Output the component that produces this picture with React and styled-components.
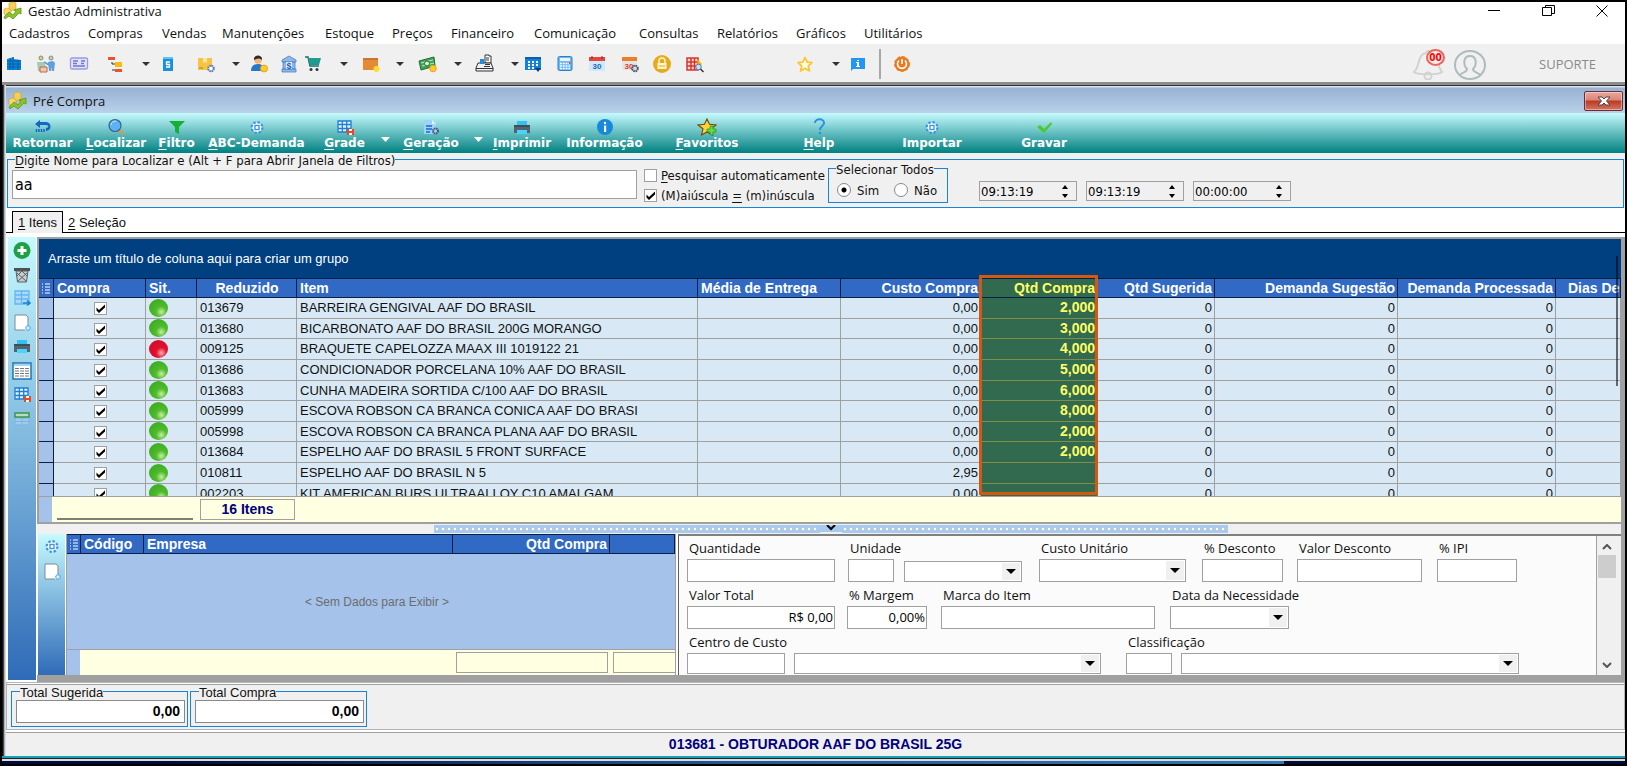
import { useId } from "react";
import styled, { createGlobalStyle, css } from "styled-components";

const UI = `"Open Sans", "Noto Sans", sans-serif`;
const TAHOMA = `"DejaVu Sans Condensed", "DejaVu Sans", sans-serif`;
const VERDANA = `"DejaVu Sans", sans-serif`;
const GRID = `"Liberation Sans", sans-serif`;

/* ---------- data ---------- */

const menus = [
  ["Cadastros", 79],
  ["Compras", 74],
  ["Vendas", 60],
  ["Manutenções", 103],
  ["Estoque", 67],
  ["Preços", 59],
  ["Financeiro", 83],
  ["Comunicação", 105],
  ["Consultas", 78],
  ["Relatórios", 79],
  ["Gráficos", 68],
  ["Utilitários", 78],
];

// [icon, space before it, label]
const shortcuts = [
  ["building", 2, "Empresas"],
  ["people", 12, "Clientes"],
  ["card", 13, "Cartões"],
  ["tree", 16, "Plano de contas"],
  ["arrow", 16, "Mais planos"],
  ["notebook", 7, "Caderno"],
  ["boxGear", 18, "Produtos"],
  ["arrow", 15, "Mais produtos"],
  ["person", 8, "Vendedores"],
  ["bank", 10, "Bancos"],
  ["cart", 4, "Compras"],
  ["arrow", 16, "Mais compras"],
  ["box", 12, "Estoque"],
  ["arrow", 14, "Mais estoque"],
  ["cash", 13, "Financeiro"],
  ["arrow", 15, "Mais financeiro"],
  ["register", 12, "Caixa"],
  ["arrow", 15, "Mais caixa"],
  ["calendar", 3, "Agenda"],
  ["calculator", 12, "Calculadora"],
  ["cal30", 12, "Calendário"],
  ["cal30Gear", 13, "Configurar calendário"],
  ["lock", 12, "Bloquear"],
  ["gridSearch", 13, "Consultar"],
  ["star", 90, "Favoritos"],
  ["arrow", 16, "Mais favoritos"],
  ["infoBox", 7, "Informações"],
];

const actions = [
  ["Retornar", "back", 73],
  ["&Localizar", "search", 74],
  ["&Filtro", "funnel", 47],
  ["&ABC-Demanda", "gear", 113],
  ["&Grade", "gridSave", 63],
  [null, "whiteArrow", 18],
  ["&Geração", "docGear", 74],
  [null, "whiteArrow", 19],
  ["&Imprimir", "printer", 70],
  ["Informação", "info", 95],
  ["&Favoritos", "starPlus", 110],
  ["&Help", "help", 114],
  ["Importar", "gear", 112],
  ["Gravar", "check", 112],
];

const sideTools = [
  ["add", "Adicionar"],
  ["trash", "Excluir"],
  ["sheetArrow", "Mover"],
  ["page", "Novo"],
  ["printer", "Imprimir"],
  ["listView", "Lista"],
  ["gridSave", "Salvar grade"],
  ["sheetGreen", "Planilha"],
];

const columns = [
  { title: "Compra", width: 92 },
  { title: "Sit.", width: 51 },
  { title: "Reduzido", width: 100, align: "center" },
  { title: "Item" },
  { title: "Média de Entrega", width: 143 },
  { title: "Custo Compra", width: 140, align: "right" },
  { title: "Qtd Compra", width: 117, align: "right", marked: true },
  { title: "Qtd Sugerida", width: 117, align: "right" },
  { title: "Demanda Sugestão", width: 183, align: "right" },
  { title: "Demanda Processada", width: 158, align: "right" },
  { title: "Dias De", width: 65, last: true },
];

const items = [
  ["013679", "BARREIRA GENGIVAL AAF DO BRASIL", "0,00", "2,000"],
  ["013680", "BICARBONATO AAF DO BRASIL 200G MORANGO", "0,00", "3,000"],
  ["009125", "BRAQUETE CAPELOZZA MAAX III 1019122 21", "0,00", "4,000", "red"],
  ["013686", "CONDICIONADOR PORCELANA 10% AAF DO BRASIL", "0,00", "5,000"],
  ["013683", "CUNHA MADEIRA SORTIDA C/100 AAF DO BRASIL", "0,00", "6,000"],
  ["005999", "ESCOVA ROBSON CA BRANCA CONICA AAF DO BRASI", "0,00", "8,000"],
  ["005998", "ESCOVA ROBSON CA BRANCA PLANA AAF DO BRASIL", "0,00", "2,000"],
  ["013684", "ESPELHO AAF DO BRASIL 5 FRONT SURFACE", "0,00", "2,000"],
  ["010811", "ESPELHO AAF DO BRASIL N 5", "2,95", ""],
  ["002203", "KIT AMERICAN BURS ULTRAALLOY C10 AMALGAM", "0,00", ""],
];

/* ---------- icons ---------- */

const glyphs = {
  logo: (
    <>
      <path d="M7 2l4-1 3 1v6l-4 2-3-2z" fill="#f5cf52" stroke="#c9a02c" strokeWidth=".6" />
      <path d="M2 8l4-1 3 2v4l-4 2-3-2z" fill="#f8d768" stroke="#c9a02c" strokeWidth=".6" />
      <path d="M2 16l5-5 4 3 3-4-2-1 7-2v6l-2-1-6 6-4-3-4 3z" fill="#8cc427" stroke="#5f951a" strokeWidth=".8" />
    </>
  ),
  arrow: <path d="M1 8h8L5 12z" fill="#333" />,
  whiteArrow: <path d="M6 0h9l-4.500 5z" fill="#fff" />,
  building: (
    <>
      <path d="M3 5l7-2v13H3zM10 5l7 1v10h-7z" fill="#0b86dc" />
      <path d="M3 7h14M3 10h14M3 13h14M6 4v12M9 3v13M14 6v10" stroke="#0a559f" strokeWidth=".8" />
    </>
  ),
  people: (
    <>
      <circle cx="5" cy="4" r="2" fill="#f2c48a" stroke="#6f9a74" />
      <circle cx="15" cy="4" r="2" fill="#f2c48a" stroke="#6f8ea8" />
      <path d="M1 8h7l2 5v4H2z" fill="#a9c9b2" />
      <path d="M12 8l5-1 2 2-1 8h-2v-4l-1 4h-2z" fill="#5f9fdc" />
      <path d="M8 8l5 3" stroke="#5f9fdc" strokeWidth="2" />
      <path d="M4 13h7v5H4z" fill="#f3c6ad" stroke="#b56b49" />
    </>
  ),
  card: (
    <>
      <rect x="1.500" y="4" width="17" height="11" rx="1.500" fill="#e2e2fb" stroke="#9a9ae0" strokeWidth="1.300" />
      <path d="M4 7h5M4 9.500h4M4 12h12M12 7h4M12 9.500h3" stroke="#7474d0" strokeWidth="1.300" />
    </>
  ),
  tree: (
    <>
      <path d="M3 3h7v3H3z" fill="#e9542c" />
      <path d="M10 8h7v5h-7z" fill="#f3bd0f" />
      <path d="M10 15h7v3h-7z" fill="#e9542c" />
      <path d="M7 16h3M7 8v2h3" stroke="#333" fill="none" />
    </>
  ),
  notebook: (
    <>
      <path d="M5 3h10v14H5z" fill="#1a8fe0" />
      <path d="M5 3h10v2H5z" fill="#53c7f7" />
      <path d="M12 8H8.500v2.500h3V13H8" stroke="#fff" strokeWidth="1.300" fill="none" />
    </>
  ),
  boxGear: (
    <>
      <path d="M2 4h14v12H2z" fill="#f5c445" />
      <path d="M7 4h4v5l-2-1-2 1z" fill="#fbe6a1" />
      <path d="M3 14h4" stroke="#a5802a" />
      <circle cx="15" cy="14.500" r="2.800" fill="#fff" stroke="#5a78b5" strokeWidth="2" strokeDasharray="1.600 .600" />
    </>
  ),
  person: (
    <>
      <circle cx="9" cy="6" r="3.800" fill="#f4b573" />
      <path d="M5 6c-1-6 9-6 8 0-2-2-5-2-8 0z" fill="#2b2b33" />
      <path d="M2 17c0-6 4-7 7-7s6 1 6 7z" fill="#2a77c9" />
      <circle cx="15" cy="14.500" r="3.500" fill="#ffc931" stroke="#e9a512" />
    </>
  ),
  bank: (
    <>
      <path d="M3 6l7-4 7 4v2H3zM3 15h14v3H3zM4 8h12v7H4z" fill="#8fb8e8" stroke="#4a80c8" strokeWidth=".8" />
      <path d="M7 8h6v7H7z" fill="#e4f0fc" />
      <text x="10" y="15" fontSize="9" fontWeight="700" textAnchor="middle" fill="#2560ad" fontFamily="Liberation Sans">$</text>
    </>
  ),
  cart: (
    <>
      <path d="M2 3h3l2 9h9" fill="none" stroke="#1f6d68" strokeWidth="1.500" />
      <path d="M5 4h13l-2 7H7z" fill="#1f9c90" />
      <circle cx="8" cy="15.500" r="1.500" fill="#1d3e55" />
      <circle cx="14" cy="15.500" r="1.500" fill="#1d3e55" />
    </>
  ),
  box: (
    <>
      <path d="M2 4h15v12H2z" fill="#e28a35" />
      <path d="M2 4h15v2H2z" fill="#cc7526" />
      <circle cx="15.500" cy="15" r="3" fill="#ffdc2e" />
    </>
  ),
  cash: (
    <>
      <path d="M1 7l15-4 1 9-14 4z" fill="#3fa455" stroke="#246b37" />
      <path d="M3 9l12-3M4 12l12-3" stroke="#bfe8c4" />
      <circle cx="9" cy="9.500" r="2.500" fill="#d4f0d6" stroke="#246b37" />
      <circle cx="15" cy="14.500" r="3.300" fill="#ffc931" stroke="#e9a512" />
    </>
  ),
  register: (
    <>
      <path d="M10 1h4v1h2v7h-6z" fill="#fff" stroke="#333" />
      <path d="M3 9h13l2 5v3H1v-3z" fill="#eef2f6" stroke="#333" />
      <path d="M5 5h4v5H5z" fill="#1f8ce0" />
      <path d="M11 4h3M11 6h3M10 10.500h5M9 12.500h6M1 14.500h17" stroke="#333" />
    </>
  ),
  calendar: (
    <>
      <path d="M2 3h16v13H2z" fill="#1481d8" />
      <path d="M2 3h16v2H2z" fill="#0c5ea8" />
      <path d="M5 8h2M9 8h2M13 8h2M5 11h2M9 11h2M13 11h2M5 14h2M9 14h2" stroke="#fff" strokeWidth="2" />
      <path d="M12 14h6l-3 4z" fill="#123e73" />
    </>
  ),
  calculator: (
    <>
      <rect x="3" y="2.500" width="14" height="14" rx="1.500" fill="#6db8f2" stroke="#2a7fca" />
      <path d="M5 4h10v3H5z" fill="#e8f5ff" />
      <path d="M5 9.500h10M5 12h10M5 14.500h10" stroke="#fff" strokeWidth="1.600" strokeDasharray="1.800 1" />
      <path d="M14 8h1.500v2H14z" fill="#e34b3c" />
    </>
  ),
  cal30: (
    <>
      <path d="M2 3h16v14H2z" fill="#cfe9fb" />
      <path d="M2 3h16v4H2z" fill="#e5453a" />
      <path d="M5 2v3M15 2v3" stroke="#8f2a22" />
      <text x="10" y="15" fontSize="8" fontWeight="700" textAnchor="middle" fill="#1769b8" fontFamily="Liberation Sans">30</text>
    </>
  ),
  cal30Gear: (
    <>
      <path d="M2 3h15v13H2z" fill="#e5e5e5" />
      <path d="M2 3h15v4H2z" fill="#ee7d28" />
      <text x="9" y="15" fontSize="8" fontWeight="700" textAnchor="middle" fill="#d8402f" fontFamily="Liberation Sans">30</text>
      <circle cx="15" cy="14.500" r="2.800" fill="#d9dde0" stroke="#47586a" strokeWidth="2" strokeDasharray="1.600 .600" />
    </>
  ),
  lock: (
    <>
      <circle cx="10" cy="10" r="9" fill="#e6ab1d" />
      <path d="M5.500 9h9v6h-9z" fill="#fff3cf" />
      <path d="M7 9V7c0-4 6-4 6 0v2" fill="none" stroke="#fff3cf" strokeWidth="1.500" />
      <path d="M7 12h6" stroke="#e6ab1d" />
    </>
  ),
  gridSearch: (
    <>
      <path d="M2 4h11v12H2z" fill="#fbd8d4" stroke="#d9332b" strokeWidth="1.500" />
      <path d="M2 8h11M2 12h11M6 4v12M9.500 4v12" stroke="#d9332b" strokeWidth="1.500" />
      <path d="M12 5l5 5-4 4z" fill="#f4b400" />
      <circle cx="13.500" cy="13" r="2.800" fill="#c4e4fa" stroke="#4f7fae" />
      <path d="M15.500 15l3 3" stroke="#333" strokeWidth="1.500" />
    </>
  ),
  star: (
    <path d="M10 3.500l2.200 4.600 4.800.5-3.700 3.400 1.200 5-4.500-2.700L5.500 17l1.200-5L3 8.600l4.800-.5z" fill="#fffbe8" stroke="#fdc52e" strokeWidth="1.700" strokeLinejoin="round" />
  ),
  infoBox: (
    <>
      <path d="M3 4h14v11H5l-2 2z" fill="#2196f3" />
      <path d="M9 6h2v1H9zM8 8h3v4h1v1H8v-1h1V9H8z" fill="#fff" />
    </>
  ),
  power: (
    <>
      <circle cx="10" cy="10" r="7.500" fill="#ea7a1e" stroke="#ea7a1e" strokeDasharray="3 2" />
      <path d="M7 6.500a4.500 4.500 0 1 0 6 0" fill="none" stroke="#fff" strokeWidth="1.600" />
      <path d="M10 5v5" stroke="#fff" strokeWidth="1.600" />
    </>
  ),
  back: (
    <>
      <path d="M2 6l5-4v2h6c6 0 6 9 0 9v-3c3 0 3-3 0-3H7v3z" fill="#1664c4" />
      <path d="M3.500 11v3M6 11v3M8.500 11v3M11 11v3" stroke="#1664c4" strokeWidth="1.500" />
    </>
  ),
  search: (
    <>
      <path d="M13 12l4 4" stroke="#d79a4c" strokeWidth="2.500" />
      <circle cx="9" cy="7.500" r="6" fill="#5cb2f5" stroke="#3a648c" strokeWidth="1.200" />
      <path d="M5 7c0-3 3-4 5-3.500" stroke="#c9e8ff" fill="none" />
    </>
  ),
  funnel: <path d="M2 3h16l-6 6v7l-4-2V9z" fill="#14b032" />,
  gear: (
    <>
      <circle cx="10" cy="9.500" r="5" fill="#eef8ff" stroke="#3f92dc" strokeWidth="3" strokeDasharray="2.200 1.700" />
      <circle cx="10" cy="9.500" r="4.300" fill="#eef8ff" />
      <rect x="8" y="7.500" width="4" height="4" fill="#fff" stroke="#3f92dc" strokeWidth="1.300" />
    </>
  ),
  gridSave: (
    <>
      <path d="M3 3h13v11H3z" fill="#e4f2fc" stroke="#1d7fd6" strokeWidth="1.300" />
      <path d="M3 6.500h13M3 10.500h13M7.300 3v11M11.700 3v11" stroke="#1d7fd6" strokeWidth="1.300" />
      <path d="M12 11h7v6h-7z" fill="#f0471f" />
      <path d="M14 11h3v2h-3zM14 15h3v2h-3z" fill="#fff" />
    </>
  ),
  docGear: (
    <>
      <path d="M3 2h8l4 4v10H3z" fill="#9ed3fb" />
      <path d="M11 2l4 4h-4z" fill="#e1f3ff" />
      <path d="M5 8h6M5 11h6M5 14h4" stroke="#1769c8" strokeWidth="1.500" />
      <circle cx="14.500" cy="13" r="2.500" fill="#9ed3fb" stroke="#435a70" strokeWidth="2" strokeDasharray="1.500 .5" />
    </>
  ),
  printer: (
    <>
      <path d="M5 3h10v5H5z" fill="#2fc3f2" />
      <path d="M2 7h16v8H2z" fill="#56636f" />
      <path d="M2 7h16v2H2z" fill="#424d58" />
      <path d="M5 12h10v4H5z" fill="#48d4fb" />
    </>
  ),
  info: (
    <>
      <circle cx="10" cy="9" r="8" fill="#1688dd" />
      <circle cx="10" cy="5" r="1.200" fill="#fff" />
      <path d="M9 7.500h2.200V14H9z" fill="#fff" />
    </>
  ),
  starPlus: (
    <>
      <path d="M10 1l2.500 5.300 6.500.7-5 3.800 1.500 6.200-5.500-3-5.500 3L6 10.800 1 7l6.500-.7z" fill="#fcd23a" stroke="#6b4a12" strokeWidth="1.100" />
      <path d="M13 8h3v3h3v3h-3v3h-3v-3h-3v-3h3z" fill="#5fdc45" stroke="#1e7d18" strokeWidth=".6" />
    </>
  ),
  help: (
    <>
      <path d="M6 5c0-5 9-5 9 0 0 3-4 3-4 7" fill="none" stroke="#2b91e0" strokeWidth="2" />
      <circle cx="11" cy="15" r="1.300" fill="#2b91e0" />
    </>
  ),
  check: <path d="M3 9l3-2 4 4 7-7 1 2-8 9z" fill="#4dc92c" />,
  add: (
    <>
      <circle cx="10" cy="9.500" r="8.500" fill="#1ea044" />
      <path d="M8.500 5h3v3h3v3h-3v3h-3v-3h-3V8h3z" fill="#fff" />
    </>
  ),
  trash: (
    <>
      <path d="M2 3h16v3H2z" fill="#4e5153" />
      <path d="M4 6h12l-1.500 11h-9z" fill="#c2cbd0" stroke="#5b6063" />
      <path d="M5 8l9 8M15 8l-9 8M10 6l5 5M10 6l-5 5" stroke="#5b6063" />
    </>
  ),
  sheetArrow: (
    <>
      <path d="M3 2h14v13H3zM3 6h14M3 10h14M9.500 2v13" fill="#a9dafa" stroke="#66b5ee" strokeWidth="1.300" />
      <path d="M11 14h6M15 11.500l3 2.500-3 2.500" stroke="#187fd8" fill="none" strokeWidth="1.500" />
    </>
  ),
  page: (
    <>
      <path d="M3 2h11l2 2v13H3z" fill="#fff" />
      <path d="M16 4v9M13 17H3V2h11l2 2" fill="none" stroke="#7d8b92" />
      <circle cx="16" cy="15" r="2.300" fill="#d3edfd" stroke="#4ba6e8" />
    </>
  ),
  listView: (
    <>
      <path d="M1 2h18v16H1z" fill="#fff" stroke="#1d77b8" strokeWidth="1.500" />
      <path d="M2 3h16v2H2z" fill="#a8d1ec" />
      <path d="M3 7.500h4M8 7.500h4M13 7.500h4M3 10h4M8 10h4M13 10h4M3 12.500h4M8 12.500h4M13 12.500h4M3 15h4M8 15h4M13 15h4" stroke="#777" />
    </>
  ),
  sheetGreen: (
    <>
      <path d="M3 9h14v7H3zM10 9v7M3 12.500h14" fill="#9ecbec" stroke="#7db5e2" />
      <path d="M3 4h14v4H3z" fill="#b8dcc0" stroke="#3c9450" strokeWidth="1.500" />
    </>
  ),
  list: <path d="M1 2h1M4 2h5M1 5h1M4 5h5M1 8h1M4 8h5M1 11h1M4 11h5" stroke="#fff" />,
};

const Icon = ({ name, w = 20, h = 20 }) => (
  <svg width={w} height={h} viewBox={`0 0 ${w} ${h}`} aria-hidden="true">
    {glyphs[name]}
  </svg>
);

// "&" marks the accelerator letter
const Accel = ({ text }) => {
  const at = text.indexOf("&");
  if (at < 0) return text;
  return (
    <span>
      {text.slice(0, at)}
      <u>{text[at + 1]}</u>
      {text.slice(at + 2)}
    </span>
  );
};

const CheckBox = (props) => (
  <CheckWrap>
    <CheckInput type="checkbox" {...props} />
    <svg width="13" height="13" viewBox="0 0 13 13" aria-hidden="true">
      <path d="M2.500 5.500v3L5 11l6-5.500v-3L5 8z" fill="#000" />
    </svg>
  </CheckWrap>
);

const Combo = ({ width, height, ...rest }) => (
  <ComboWrap $w={width} $h={height}>
    <ComboSelect {...rest} />
    <ComboArrow>
      <svg width="10" height="6" viewBox="0 0 10 6" aria-hidden="true">
        <path d="M0 0h10L5 5z" fill="#000" />
      </svg>
    </ComboArrow>
  </ComboWrap>
);

const Field = ({ label, width, gap, combo, height, ...rest }) => {
  const id = useId();
  return (
    <FieldBox $gap={gap}>
      {label && <FieldLabel htmlFor={id}>{label}</FieldLabel>}
      {combo ? (
        <Combo id={id} width={width} height={height} {...rest} />
      ) : (
        <TextInput id={id} $w={width} $h={height} {...rest} />
      )}
    </FieldBox>
  );
};

const TimeField = ({ value, label }) => (
  <TimeBox>
    <TimeInput defaultValue={value} aria-label={label} />
    <Spinner>
      <button aria-label="Aumentar">
        <svg width="6" height="4" viewBox="0 0 6 4"><path d="M0 4l3-4 3 4z" /></svg>
      </button>
      <button aria-label="Diminuir">
        <svg width="6" height="4" viewBox="0 0 6 4"><path d="M0 0l3 4 3-4z" /></svg>
      </button>
    </Spinner>
  </TimeBox>
);

const ItemsTable = () => (
  <DataTable>
    <colgroup>
      <col width="15" />
      {columns.map((c) => (
        <col key={c.title} width={c.width} />
      ))}
    </colgroup>
    <thead>
      <tr>
        <HeadCell $align="center"><Icon name="list" w={10} h={13} /></HeadCell>
        {columns.map((c) => (
          <HeadCell key={c.title} scope="col" $align={c.align} $marked={c.marked} $last={c.last}>
            {c.title}
          </HeadCell>
        ))}
      </tr>
    </thead>
    <tbody>
      {items.map(([code, name, cost, qty, status]) => (
        <ItemRow key={code}>
          <Indicator />
          <Cell $align="center">
            <CheckBox defaultChecked aria-label={`Comprar ${name}`} />
          </Cell>
          <Cell><Ball $red={status === "red"} /></Cell>
          <Cell>{code}</Cell>
          <Cell>{name}</Cell>
          <Cell />
          <Cell $align="right">{cost}</Cell>
          <Cell $align="right" $marked>{qty}</Cell>
          <Cell $align="right">0</Cell>
          <Cell $align="right">0</Cell>
          <Cell $align="right">0</Cell>
          <Cell />
        </ItemRow>
      ))}
    </tbody>
  </DataTable>
);

const App = () => (
  <Screen>
    <GlobalStyle />
    <TitleBar>
      <Icon name="logo" />
      <TitleText>Gestão Administrativa</TitleText>
      <WindowButton aria-label="Minimizar">
        <svg width="13" height="13" viewBox="0 0 13 13"><path d="M0 5.500h12" stroke="#000" /></svg>
      </WindowButton>
      <WindowButton aria-label="Restaurar">
        <svg width="13" height="13" viewBox="0 0 13 13" fill="none" stroke="#000"><path d="M.5 2.500h9v8h-9zM3.500 2V.5h9v8H10" /></svg>
      </WindowButton>
      <WindowButton aria-label="Fechar">
        <svg width="13" height="13" viewBox="0 0 13 13"><path d="M.5.5l11 11M11.500.5l-11 11" stroke="#000" /></svg>
      </WindowButton>
    </TitleBar>

    <MenuBar>
      {menus.map(([name, width]) => (
        <MenuButton key={name} $w={width}>{name}</MenuButton>
      ))}
    </MenuBar>

    <Shortcuts>
      {shortcuts.map(([icon, gap, label]) => (
        <ShortcutButton key={label} $gap={gap} aria-label={label}>
          <Icon name={icon} w={icon === "arrow" ? 10 : 20} />
        </ShortcutButton>
      ))}
      <Separator />
      <ShortcutButton $gap={11} aria-label="Sair"><Icon name="power" /></ShortcutButton>
      <UserArea>
        <BellButton aria-label="Notificações">
          <svg width="32" height="32" viewBox="0 0 32 32" fill="none" stroke="#d2d2d2" strokeWidth="2">
            <path d="M2 24c6-4 3-18 12-19 1-3 4-3 5 0 8 1 6 14 11 19-2 3-26 3-28 0z" />
            <circle cx="16" cy="28" r="3.500" />
          </svg>
          <BellBadge>00</BellBadge>
        </BellButton>
        <svg width="34" height="34" viewBox="0 0 34 34" fill="none" stroke="#aebbbd" strokeWidth="2" aria-hidden="true">
          <ellipse cx="17" cy="18" rx="15" ry="14" />
          <path d="M7 28c1-3 7-2 7-6-4-4-4-13 3-13s7 9 3 13c0 4 6 3 7 6" />
        </svg>
        <UserName>SUPORTE</UserName>
      </UserArea>
    </Shortcuts>

    <ChildWindow>
      <ChildTitle>
        <Icon name="logo" />
        <TitleText>Pré Compra</TitleText>
        <CloseButton aria-label="Fechar Pré Compra">
          <svg width="14" height="10" viewBox="0 0 14 10">
            <path d="M1 1h4l2 2 2-2h4L9.500 5 13 9H9L7 7 5 9H1l3.500-4z" fill="#fff" stroke="#56424a" />
          </svg>
        </CloseButton>
      </ChildTitle>

      <ActionBar>
        {actions.map(([label, icon, width], i) =>
          label ? (
            <ActionButton key={i} $w={width}>
              <Icon name={icon} h={18} />
              <Accel text={label} />
            </ActionButton>
          ) : (
            <ActionArrow key={i} $w={width} aria-label="Mais opções">
              <Icon name={icon} w={20} h={6} />
            </ActionArrow>
          )
        )}
      </ActionBar>

      <SearchArea>
        <SearchGroup>
          <Legend><Accel text="&Digite Nome para Localizar e (Alt + F para Abrir Janela de Filtros)" /></Legend>
          <SearchRow>
            <SearchInput defaultValue="aa" aria-label="Nome para localizar" />
            <Checks>
              <CheckLabel><CheckBox /><Accel text="&Pesquisar automaticamente" /></CheckLabel>
              <CheckLabel><CheckBox defaultChecked /><Accel text="(M)aiúscula &= (m)inúscula" /></CheckLabel>
            </Checks>
            <SelectAllGroup>
              <Legend>Selecionar Todos</Legend>
              <Radios>
                <CheckLabel><Radio name="todos" defaultChecked />Sim</CheckLabel>
                <CheckLabel><Radio name="todos" />Não</CheckLabel>
              </Radios>
            </SelectAllGroup>
            <Times>
              <TimeField value="09:13:19" label="Hora inicial" />
              <TimeField value="09:13:19" label="Hora final" />
              <TimeField value="00:00:00" label="Tempo decorrido" />
            </Times>
          </SearchRow>
        </SearchGroup>
      </SearchArea>

      <Tabs role="tablist">
        <Tab role="tab" aria-selected="true" $active><Accel text="&1 Itens" /></Tab>
        <Tab role="tab" aria-selected="false"><Accel text="&2 Seleção" /></Tab>
      </Tabs>

      <Main>
        <SideBar>
          {sideTools.map(([icon, label]) => (
            <SideButton key={label} aria-label={label}><Icon name={icon} /></SideButton>
          ))}
        </SideBar>
        <Content>
          <GridPane>
            <GridClip>
              <GroupPanel>Arraste um título de coluna aqui para criar um grupo</GroupPanel>
              <ItemsTable />
              <ScrollMark />
            </GridClip>
            <GridFooter>
              <FooterStub />
              <FooterRule />
              <FooterBox $w={95} $gap={7}>16 Itens</FooterBox>
            </GridFooter>
          </GridPane>

          <Splitter>
            <SplitterBar />
            <SplitterButton aria-label="Recolher painel">
              <svg width="10" height="6" viewBox="0 0 10 6"><path d="M1 0l4 4 4-4" fill="none" stroke="#000" strokeWidth="2" /></svg>
            </SplitterButton>
            <SplitterBar />
          </Splitter>

          <Lower>
            <LowerTools>
              <SideButton aria-label="Configurar"><Icon name="gear" /></SideButton>
              <SideButton aria-label="Novo registro"><Icon name="page" /></SideButton>
            </LowerTools>
            <CompanyPane>
              <DataTable>
                <colgroup>
                  <col width="14" />
                  <col width="63" />
                  <col />
                  <col width="157" />
                  <col width="65" />
                </colgroup>
                <thead>
                  <tr>
                    <HeadCell $align="center"><Icon name="list" w={10} h={13} /></HeadCell>
                    <HeadCell scope="col">Código</HeadCell>
                    <HeadCell scope="col">Empresa</HeadCell>
                    <HeadCell scope="col" $align="right">Qtd Compra</HeadCell>
                    <HeadCell />
                  </tr>
                </thead>
              </DataTable>
              <EmptyText>&lt; Sem Dados para Exibir &gt;</EmptyText>
              <GridFooter>
                <FooterStub />
                <FooterFill />
                <FooterBox $w={152} />
                <FooterBox $w={62} $gap={5} $open />
              </GridFooter>
            </CompanyPane>
            <FormPane>
              <FormRows>
                <FormRow>
                  <Field label="Quantidade" width={148} />
                  <Field label="Unidade" width={46} gap={13} />
                  <Field width={118} gap={10} combo height={21} aria-label="Descrição da unidade" />
                  <Field label="Custo Unitário" width={147} gap={17} combo />
                  <Field label="% Desconto" width={81} gap={16} />
                  <Field label="Valor Desconto" width={125} gap={14} />
                  <Field label="% IPI" width={80} gap={15} />
                </FormRow>
                <FormRow>
                  <Field label="Valor Total" width={148} defaultValue="R$ 0,00" />
                  <Field label="% Margem" width={80} gap={12} defaultValue="0,00%" />
                  <Field label="Marca do Item" width={214} gap={14} />
                  <Field label="Data da Necessidade" width={119} gap={15} combo />
                </FormRow>
                <FormRow>
                  <Field label="Centro de Custo" width={98} height={21} />
                  <Field width={307} gap={9} combo height={21} aria-label="Nome do centro de custo" />
                  <Field label="Classificação" width={46} gap={25} height={21} />
                  <Field width={338} gap={9} combo height={21} aria-label="Nome da classificação" />
                </FormRow>
              </FormRows>
              <ScrollBar>
                <button aria-label="Rolar para cima">
                  <svg width="10" height="6" viewBox="0 0 10 6"><path d="M1 5l4-4 4 4" /></svg>
                </button>
                <ScrollThumb />
                <button aria-label="Rolar para baixo">
                  <svg width="10" height="6" viewBox="0 0 10 6"><path d="M1 1l4 4 4-4" /></svg>
                </button>
              </ScrollBar>
            </FormPane>
          </Lower>
        </Content>
      </Main>

      <Totals>
        <TotalGroup>
          <Legend $grid>Total Sugerida</Legend>
          <TotalInput defaultValue="0,00" aria-label="Total Sugerida" />
        </TotalGroup>
        <TotalGroup>
          <Legend $grid>Total Compra</Legend>
          <TotalInput defaultValue="0,00" aria-label="Total Compra" />
        </TotalGroup>
      </Totals>
      <Status>013681 - OBTURADOR AAF DO BRASIL 25G</Status>
    </ChildWindow>
    <BottomEdge />
  </Screen>
);

/* ---------- styles ---------- */

const GlobalStyle = createGlobalStyle`
  *,
  *::after {
    box-sizing: border-box;
  }
  body {
    margin: 0;
    background: #000;
    font-family: ${UI};
    font-size: 13px;
    color: #111;
  }
  button {
    padding: 0;
    border: 0;
    background: none;
    font: inherit;
    color: inherit;
  }
  svg {
    display: block;
    flex: none;
  }
  u {
    text-underline-offset: 2px;
  }
`;

const Screen = styled.div`
  display: flex;
  flex-direction: column;
  height: 100vh;
  min-height: 640px;
  padding: 2px;
  overflow: hidden;
  white-space: nowrap;
`;

const TitleBar = styled.header`
  display: flex;
  align-items: center;
  height: 20px;
  padding: 0 16px 2px 0;
  background: #fff;
`;

const TitleText = styled.span`
  flex: 1;
  padding-left: 6px;
  line-height: 18px;
`;

const WindowButton = styled.button`
  width: 13px;
  height: 13px;
  margin-left: 41px;
`;

const MenuBar = styled.nav`
  display: flex;
  height: 24px;
  padding-left: 7px;
  background: #fff;
  border-bottom: 2px solid #f0f0f0;
`;

const MenuButton = styled.button`
  width: ${(p) => p.$w}px;
  height: 22px;
  text-align: left;
`;

const Shortcuts = styled.div`
  display: flex;
  align-items: center;
  height: 36px;
  background: #f0f0f0;
`;

const ShortcutButton = styled.button`
  margin-left: ${(p) => p.$gap}px;
`;

const Separator = styled.div`
  width: 2px;
  height: 30px;
  margin-left: 11px;
  background: #a8a8a8;
`;

const UserArea = styled.div`
  display: flex;
  align-items: center;
  margin-left: auto;
  padding-right: 29px;
  gap: 9px;
`;

const BellButton = styled.button`
  position: relative;
`;

const BellBadge = styled.span`
  position: absolute;
  top: 1px;
  right: -1px;
  width: 19px;
  height: 17px;
  border: 2px solid #e8665c;
  border-radius: 50%;
  background: #fbeaea;
  color: #f00;
  font: bold 10px/13px ${TAHOMA};
  text-align: center;
`;

const UserName = styled.span`
  padding-left: 43px;
  color: #8a8a8a;
  line-height: 16px;
`;

const ChildWindow = styled.section`
  display: flex;
  flex: 1;
  flex-direction: column;
  min-height: 0;
  padding-left: 4px;
  border-top: 3px solid #8c8c8c;
  background: linear-gradient(90deg, #111 1px, #777 2px, #dfe8f2 3px, #b9d1ea 4px);
`;

const ChildTitle = styled.div`
  display: flex;
  align-items: center;
  height: 28px;
  padding: 2px 2px 0 1px;
  border-top: 1px solid #333;
  background: linear-gradient(#d8e2ee 1px, #98b2d2 2px, #b9d1ea);
`;

const CloseButton = styled.button`
  display: flex;
  align-items: center;
  justify-content: center;
  width: 39px;
  height: 20px;
  border: 1px solid #6b2c36;
  border-radius: 2px;
  background: linear-gradient(#e9a79d, #db8478 45%, #b83a22 50%, #d5755f);
  box-shadow: inset 0 0 0 1px rgba(255, 255, 255, 0.4);
`;

const ActionBar = styled.div`
  display: flex;
  height: 40px;
  padding-top: 5px;
  background: linear-gradient(#c6fafe, #008080);
`;

const ActionButton = styled.button`
  display: flex;
  flex-direction: column;
  align-items: center;
  width: ${(p) => p.$w}px;
  color: #fff;
  font: bold 12px/14px ${VERDANA};
`;

const ActionArrow = styled.button`
  display: flex;
  justify-content: center;
  width: ${(p) => p.$w}px;
  padding-top: 19px;
`;

const groupBox = css`
  min-width: 0;
  margin: 0;
  padding: 0;
  border: 1px solid #1883d7;
`;

const SearchArea = styled.div`
  padding: 6px 1px 0;
  background: #f0f0f0;
`;

const SearchGroup = styled.fieldset`
  ${groupBox}
`;

const Legend = styled.legend`
  height: 1px;
  margin-left: ${(p) => (p.$grid ? 4 : 7)}px;
  padding: 0;
  background: #f0f0f0;
  font: 13px/4px ${(p) => (p.$grid ? GRID : TAHOMA)};
`;

const SearchRow = styled.div`
  display: flex;
  height: 47px;
  padding: 5px 4px 0;
`;

const SearchInput = styled.input`
  flex: 0 1 625px;
  min-width: 0;
  height: 29px;
  margin-top: 5px;
  padding: 0 2px;
  border: 1px solid #a0a0a0;
  background: #fff;
  font: 16px ${TAHOMA};
`;

const Checks = styled.div`
  display: flex;
  flex: none;
  flex-direction: column;
  width: 184px;
  margin-left: 7px;
`;

const CheckLabel = styled.label`
  display: flex;
  align-items: center;
  gap: 4px;
  height: 20px;
  font: 13px ${TAHOMA};
`;

const CheckWrap = styled.span`
  display: inline-grid;
  vertical-align: middle;
  > * {
    grid-area: 1 / 1;
  }
  input:not(:checked) + svg {
    visibility: hidden;
  }
  svg {
    pointer-events: none;
  }
`;

const CheckInput = styled.input`
  appearance: none;
  width: 13px;
  height: 13px;
  margin: 0;
  border: 1px solid #a0a0a0;
  background: #fff;
`;

const Radio = styled.input.attrs({ type: "radio" })`
  appearance: none;
  width: 14px;
  height: 14px;
  margin: 0;
  border: 1px solid #888;
  border-radius: 50%;
  background: #fff;
  &:checked {
    background: radial-gradient(#000 2px, #fff 3px);
  }
`;

const SelectAllGroup = styled.fieldset`
  ${groupBox}
  flex: none;
  width: 120px;
  height: 35px;
  margin-top: 3px;
`;

const Radios = styled.div`
  display: flex;
  gap: 15px;
  padding: 11px 0 0 8px;
  label {
    gap: 6px;
  }
`;

const Times = styled.div`
  display: flex;
  gap: 9px;
  margin: 16px 0 0 31px;
`;

const TimeBox = styled.div`
  display: flex;
  width: 98px;
  height: 20px;
  border: 1px solid #a0a0a0;
`;

const TimeInput = styled.input`
  flex: 1;
  min-width: 0;
  padding: 0 0 0 1px;
  border: 0;
  background: #f0f0f0;
  font: 13px ${TAHOMA};
`;

const Spinner = styled.div`
  display: flex;
  flex-direction: column;
  justify-content: center;
  gap: 5px;
  padding-right: 8px;
`;

const Tabs = styled.div`
  display: flex;
  align-items: flex-end;
  height: 25px;
  padding-left: 6px;
  background: #fff;
  box-shadow: inset 0 -1px #000;
`;

const Tab = styled.button`
  height: 22px;
  padding: 0 5px;
  font: 13px ${GRID};
  ${(p) =>
    p.$active &&
    css`
      border: 1px solid #000;
      border-bottom: 0;
      background: #f0f0f0;
    `}
`;

const Main = styled.main`
  display: flex;
  flex: 1;
  min-height: 0;
  gap: 1px;
  padding: 4px 4px 0 2px;
  background: linear-gradient(#fff 4px, transparent 4px), linear-gradient(90deg, #fff 31px, #a0a0a0 31px);
`;

const SideBar = styled.div`
  display: flex;
  flex-direction: column;
  align-items: center;
  gap: 4px;
  width: 28px;
  margin-bottom: 2px;
  padding-top: 4px;
  background: linear-gradient(#c6fafe, #2f6bb8);
`;

const SideButton = styled.button`
  height: 20px;
`;

const Content = styled.div`
  display: flex;
  flex: 1;
  flex-direction: column;
  min-width: 0;
  margin-bottom: 7px;
  background: #f0f0f0;
`;

const GridPane = styled.div`
  display: flex;
  flex: 1;
  flex-direction: column;
  min-height: 0;
  border: 2px solid #a0a0a0;
  border-right: 0;
`;

const GridClip = styled.div`
  position: relative;
  flex: 1;
  min-height: 0;
  overflow: hidden;
  background: #d8e9f5;
`;

const GroupPanel = styled.div`
  height: 39px;
  padding-left: 9px;
  background: #004080;
  color: #fff;
  font: 13px/40px ${GRID};
`;

const DataTable = styled.table`
  width: 100%;
  border-collapse: separate;
  border-spacing: 0;
  table-layout: fixed;
  font: 13px/15px ${GRID};
`;

const cellBase = css`
  height: 20px;
  padding: 0 2px 1px 3px;
  text-align: ${(p) => p.$align || "left"};
  overflow: hidden;
`;

const HeadCell = styled.th`
  ${cellBase}
  padding-bottom: 0;
  border: 1px solid #0b1f45;
  border-left: 0;
  background: #316ac5;
  color: #fff;
  font-size: 14px;
  ${(p) => p.$last && "padding: 0 0 0 12px;"}
  svg {
    margin: auto;
  }
  &:first-child {
    padding: 0;
  }
  ${(p) =>
    p.$marked &&
    css`
      position: relative;
      overflow: visible;
      background: #316a4f;
      color: #ffff66;
      &::after {
        content: "";
        position: absolute;
        z-index: 1;
        top: -4px;
        right: -1px;
        left: -2px;
        height: 220px;
        border: 3px solid #d2590f;
      }
    `}
`;

const Cell = styled.td`
  ${cellBase}
  border-right: 1px solid #a0a0a0;
  border-bottom: 1px solid #a0a0a0;
  ${(p) =>
    p.$marked &&
    css`
      border-color: #7f8f45;
      background: #316a4f;
      color: #ffff66;
      font-weight: bold;
      font-size: 14px;
    `}
`;

const Indicator = styled.td`
  padding: 0;
  border-right: 1px solid #0b1f45;
  border-bottom: 1px solid #0b1f45;
  background: #a4c2ea;
`;

const ItemRow = styled.tr`
  td {
    height: 21px;
  }
  &:nth-child(5n + 2) td,
  &:nth-child(5n) td {
    height: 20px;
  }
`;

const Ball = styled.div`
  width: 19px;
  height: 18px;
  border-radius: 50%;
  background: ${(p) =>
    p.$red
      ? "radial-gradient(circle at 65% 72%, #ffb0b0, #e01030 30%, #d00824)"
      : "radial-gradient(circle at 65% 72%, #c5f0a0, #4fbb2c 30%, #35a51e)"};
`;

const ScrollMark = styled.div`
  position: absolute;
  top: 17px;
  right: 3px;
  width: 2px;
  height: 130px;
  background: rgba(0, 0, 0, 0.55);
`;

const GridFooter = styled.div`
  display: flex;
  align-items: center;
  height: 26px;
  border-top: 1px solid #a0a0a0;
  background: #ffffe1;
`;

const FooterStub = styled.div`
  align-self: stretch;
  width: 13px;
  background: #a4c2ea;
`;

const FooterRule = styled.div`
  align-self: flex-end;
  width: 136px;
  height: 2px;
  margin: 0 0 2px 5px;
  background: #808070;
`;

const FooterFill = styled.div`
  flex: 1;
`;

const FooterBox = styled.div`
  width: ${(p) => p.$w}px;
  height: 21px;
  margin-left: ${(p) => p.$gap || 0}px;
  border: 1px solid #a0a0a0;
  ${(p) => p.$open && "border-right: 0;"}
  color: #000080;
  font: bold 14px/19px ${GRID};
  text-align: center;
`;

const Splitter = styled.div`
  display: flex;
  justify-content: center;
  height: 10px;
  padding: 1px 0 0 4px;
`;

const SplitterBar = styled.div`
  flex: 0 1 386px;
  height: 8px;
  background: radial-gradient(circle, #fff 1px, #8fa6bf 2px, #a6caf0 2px) 0 0 / 6px 8px;
`;

const SplitterButton = styled.button`
  display: flex;
  justify-content: center;
  width: 22px;
  height: 7px;
  background: #a6caf0;
`;

const Lower = styled.div`
  display: flex;
  height: 141px;
  background: #fff;
`;

const LowerTools = styled.div`
  display: flex;
  flex-direction: column;
  align-items: center;
  gap: 5px;
  width: 27px;
  margin-left: 1px;
  padding-top: 3px;
  background: linear-gradient(#c6fafe, #2f6bb8);
`;

const CompanyPane = styled.div`
  display: flex;
  flex: 0 1 610px;
  flex-direction: column;
  min-width: 0;
  margin-left: 1px;
  border-left: 1px solid #a0a0a0;
  border-right: 1px solid #a0a0a0;
  background: #a4c2ea;
`;

const EmptyText = styled.p`
  display: flex;
  flex: 1;
  align-items: center;
  justify-content: center;
  margin: 0;
  padding-left: 12px;
  color: #6d6d6d;
  font: 12px ${GRID};
`;

const FormPane = styled.div`
  display: flex;
  flex: 1;
  min-width: 0;
  margin-left: 2px;
  border-top: 2px solid #808080;
  border-left: 1px solid #606060;
  background: #fbfbfb;
`;

const FormRows = styled.form`
  display: flex;
  flex: 1;
  flex-direction: column;
  gap: 5px;
  min-width: 0;
  padding: 4px 0 0 8px;
  overflow: hidden;
`;

const FormRow = styled.div`
  display: flex;
  align-items: flex-end;
`;

const FieldBox = styled.div`
  display: flex;
  flex: none;
  flex-direction: column;
  margin-left: ${(p) => p.$gap || 0}px;
`;

const FieldLabel = styled.label`
  width: 0;
  padding: 0 0 2px 2px;
  line-height: 17px;
`;

const TextInput = styled.input`
  width: ${(p) => p.$w}px;
  height: ${(p) => p.$h || 23}px;
  padding: 0 1px 2px;
  border: 1px solid #a0a0a0;
  background: #fff;
  font: 13px ${UI};
  text-align: right;
`;

const ComboWrap = styled.div`
  display: grid;
  width: ${(p) => p.$w}px;
  height: ${(p) => p.$h || 23}px;
  > * {
    grid-area: 1 / 1;
  }
`;

const ComboSelect = styled.select`
  appearance: none;
  border: 1px solid #a0a0a0;
  border-radius: 0;
  background: #fff;
`;

const ComboArrow = styled.span`
  display: flex;
  align-items: center;
  justify-content: center;
  justify-self: end;
  width: 18px;
  margin: 2px;
  background: #f0f0f0;
  pointer-events: none;
`;

const ScrollBar = styled.div`
  display: flex;
  flex-direction: column;
  width: 25px;
  padding: 2px 5px 2px 1px;
  border-left: 1px solid #a0a0a0;
  background: #f0f0f0;
  button {
    display: flex;
    align-items: center;
    justify-content: center;
    height: 17px;
  }
  button:last-child {
    margin-top: auto;
  }
  path {
    fill: none;
    stroke: #555;
    stroke-width: 2;
  }
`;

const ScrollThumb = styled.div`
  height: 23px;
  background: #cdcdcd;
`;

const Totals = styled.div`
  display: flex;
  gap: 2px;
  height: 48px;
  padding: 8px 4px 0;
  border: 1px solid #b4b4b4;
  box-shadow: inset 0 1px #fff, inset 0 2px #a0a0a0;
  background: #f0f0f0;
`;

const TotalGroup = styled.fieldset`
  ${groupBox}
  width: 177px;
  height: 36px;
  padding: 8px 2px 0 4px;
`;

const TotalInput = styled.input`
  display: block;
  width: 100%;
  height: 23px;
  padding: 0 4px 1px;
  border: 1px solid #8a8a8a;
  background: #fff;
  font: bold 14px ${GRID};
  text-align: right;
`;

const Status = styled.footer`
  height: 26px;
  border-top: 2px solid #fff;
  box-shadow: inset 0 1px #a0a0a0;
  background: #f0f0f0;
  color: #000080;
  font: bold 14px/25px ${GRID};
  text-align: center;
`;

const BottomEdge = styled.div`
  height: 8px;
  background: linear-gradient(#18a0b8 2px, #222 2px, #222 3px, #dcdcdc 3px, #dcdcdc 5px, transparent 5px),
    linear-gradient(90deg, #000b3c 10%, #1d5a96 45%, #2d78b4 79%, #000a35 79%);
`;

export default App;
